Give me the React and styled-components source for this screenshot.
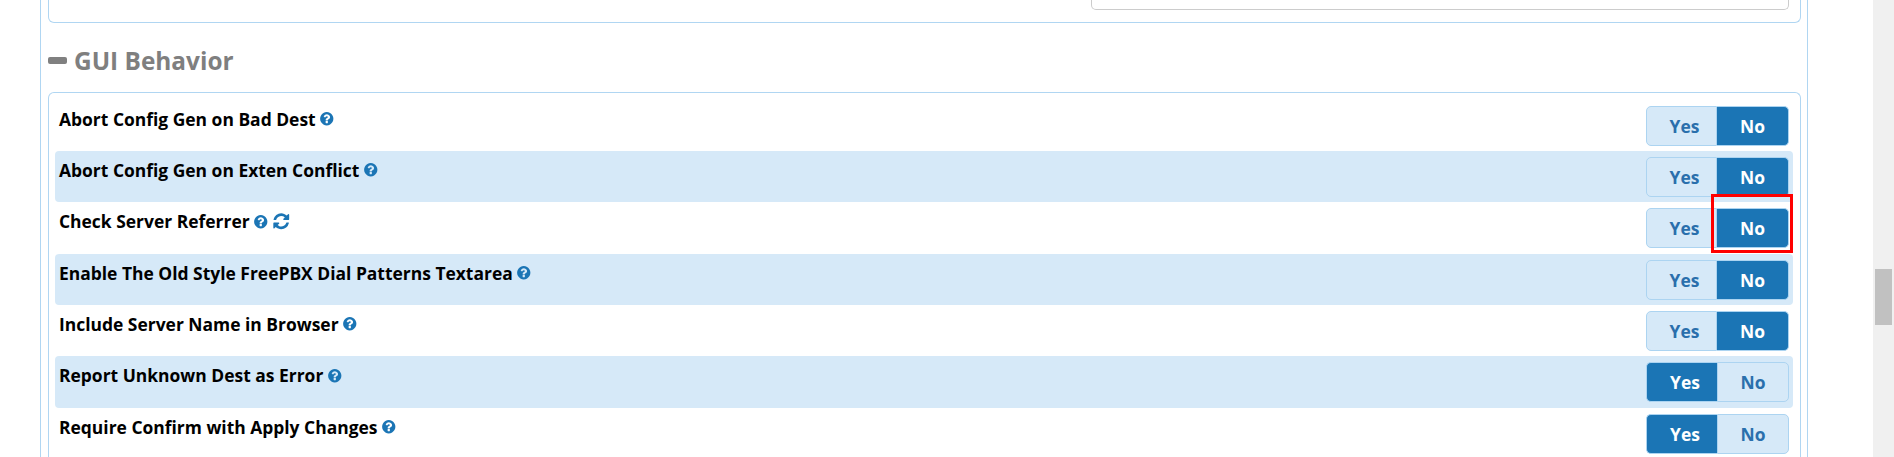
import React from 'react';
import styled, { createGlobalStyle } from 'styled-components';

const GlobalStyle = createGlobalStyle`
  html, body {
    margin: 0;
    padding: 0;
    height: 457px;
    overflow: hidden;
    background: #fff;
    font-family: "Open Sans", "Noto Sans", sans-serif;
  }
`;

const Page = styled.div`
  display: flex;
  height: 457px;
  position: relative;
`;

const Content = styled.div`
  flex: 1;
  padding-left: 40px;
  padding-right: 65px;
`;

const Wrapper = styled.div`
  height: 457px;
  box-sizing: border-box;
  padding: 0 6px 0 7px;
  border-left: 1px solid #b0d6f2;
  border-right: 1px solid #b0d6f2;
`;

const PrevPanel = styled.div`
  height: 23px;
  box-sizing: border-box;
  border: 1px solid #b0d6f2;
  border-top: 0;
  border-radius: 0 0 6px 6px;
  padding-right: 11px;
  display: flex;
  justify-content: flex-end;
`;

const PrevInput = styled.div`
  width: 698px;
  height: 10px;
  box-sizing: border-box;
  border: 1px solid #ccc;
  border-top: 0;
  border-radius: 0 0 5px 5px;
`;

const Heading = styled.h2`
  display: flex;
  align-items: center;
  gap: 7px;
  height: 69px;
  margin: 0;
  padding-top: 6px;
  box-sizing: border-box;
  font-size: 24.4px;
  font-weight: 700;
  color: #7f7f7f;
`;

const MinusIcon = styled.svg`
  width: 19px;
  height: 7px;
  fill: #808080;
`;

const Panel = styled.div`
  border: 1px solid #b0d6f2;
  border-bottom: 0;
  border-radius: 6px 6px 0 0;
  padding: 6.67px 7px 0 6px;
`;

const Row = styled.div`
  display: flex;
  justify-content: space-between;
  height: 51.33px;
  box-sizing: border-box;
  padding: 6px 4px 0 4px;
  border-radius: 4px;
  background: ${(p) => (p.$striped ? '#d6e9f8' : 'transparent')};
`;

const Label = styled.div`
  display: flex;
  align-items: center;
  gap: 3.5px;
  height: 24px;
  padding-top: 1px;
  font-size: 17.45px;
  font-weight: 700;
  color: #000;
`;

const Glyph = styled.svg`
  width: ${(p) => p.$size}px;
  height: ${(p) => p.$size}px;
  fill: #1b75b5;
`;

const Toggle = styled.div`
  display: grid;
  grid-template-columns: 71px 72px;
  height: 40px;
`;

const ToggleButton = styled.div`
  display: flex;
  align-items: center;
  justify-content: center;
  box-sizing: border-box;
  font-size: 17.45px;
  font-weight: 700;
  color: ${(p) => (p.$active ? '#fff' : '#2a6fac')};
  background: ${(p) => (p.$active ? '#1b75b5' : '#d6e9f8')};
  border: 1px solid #acd4f1;
  &:first-child {
    padding-left: 6px;
    border-radius: 5px 0 0 5px;
    border-right: ${(p) => (p.$active ? '0' : '1px solid #acd4f1')};
  }
  &:last-child {
    border-radius: 0 5px 5px 0;
    border-left: ${(p) => (p.$active ? '0' : '1px solid #acd4f1')};
  }
`;

const Highlight = styled.div`
  position: absolute;
  left: 1711px;
  top: 194px;
  width: 82px;
  height: 59px;
  box-sizing: border-box;
  border: 3px solid #f00;
`;

const Scrollbar = styled.div`
  width: 21px;
  height: 457px;
  box-sizing: border-box;
  padding: 269px 2px 0;
  background: #f0f0f0;
`;

const ScrollThumb = styled.div`
  height: 56px;
  background: #c1c1c1;
`;

const HelpIcon = () => (
  <Glyph $size={15.5} viewBox="0 0 1792 1792">
    <path d="M1024 1376v-192q0-14-9-23t-23-9h-192q-14 0-23 9t-9 23v192q0 14 9 23t23 9h192q14 0 23-9t9-23zm256-672q0-88-55.5-163t-138.5-116-170-41q-243 0-371 213-15 24 8 42l132 100q7 6 19 6 16 0 25-12 53-68 86-92 34-24 86-24 48 0 85.5 26t37.5 59q0 38-20 61t-68 45q-63 28-115.5 86.5t-52.5 125.5v36q0 14 9 23t23 9h192q14 0 23-9t9-23q0-19 21.5-49.5t54.5-49.5q32-18 49-28.5t46-35 44.5-48 28-60.5 12.5-81zm384 192q0 209-103 385.5t-279.5 279.5-385.5 103-385.5-103-279.5-279.5-103-385.5 103-385.5 279.5-279.5 385.5-103 385.5 103 279.5 279.5 103 385.5z" />
  </Glyph>
);

const RefreshIcon = () => (
  <Glyph $size={18.5} viewBox="0 0 1792 1792">
    <path d="M1639 1056q0 5-1 7-64 268-268 434.5t-478 166.5q-146 0-282.5-55t-243.5-157l-129 129q-19 19-45 19t-45-19-19-45v-448q0-26 19-45t45-19h448q26 0 45 19t19 45-19 45l-137 137q71 66 161 102t187 36q134 0 250-65t186-179q11-17 53-117 8-23 30-23h192q13 0 22.5 9.5t9.5 22.5zm25-800v448q0 26-19 45t-45 19h-448q-26 0-45-19t-19-45 19-45l138-138q-148-137-349-137-134 0-250 65t-186 179q-11 17-53 117-8 23-30 23h-199q-13 0-22.5-9.5t-9.5-22.5v-7q65-268 270-434.5t480-166.5q146 0 284 55.5t245 156.5l130-129q19-19 45-19t45 19 19 45z" />
  </Glyph>
);

const settings = [
  { label: 'Abort Config Gen on Bad Dest', value: 'no' },
  { label: 'Abort Config Gen on Exten Conflict', value: 'no' },
  { label: 'Check Server Referrer', value: 'no', reload: true },
  { label: 'Enable The Old Style FreePBX Dial Patterns Textarea', value: 'no' },
  { label: 'Include Server Name in Browser', value: 'no' },
  { label: 'Report Unknown Dest as Error', value: 'yes' },
  { label: 'Require Confirm with Apply Changes', value: 'yes' },
];

const App = () => {
  return (
    <Page>
      <GlobalStyle />
      <Content>
        <Wrapper>
          <PrevPanel>
            <PrevInput />
          </PrevPanel>
          <Heading>
            <MinusIcon viewBox="0 0 19 7">
              <rect width="19" height="7" rx="2" />
            </MinusIcon>
            GUI Behavior
          </Heading>
          <Panel>
            {settings.map((s, i) => (
              <Row key={s.label} $striped={i % 2 === 1}>
                <Label>
                  {s.label}
                  <HelpIcon />
                  {s.reload && <RefreshIcon />}
                </Label>
                <Toggle>
                  <ToggleButton $active={s.value === 'yes'}>Yes</ToggleButton>
                  <ToggleButton $active={s.value === 'no'}>No</ToggleButton>
                </Toggle>
              </Row>
            ))}
          </Panel>
        </Wrapper>
      </Content>
      <Scrollbar>
        <ScrollThumb />
      </Scrollbar>
      <Highlight />
    </Page>
  );
};

export default App;
